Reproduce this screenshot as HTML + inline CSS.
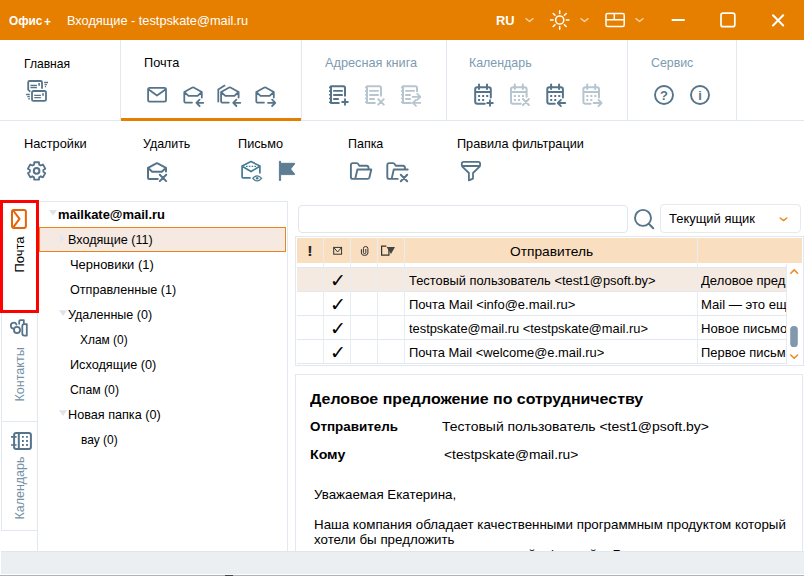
<!DOCTYPE html>
<html lang="ru"><head><meta charset="utf-8"><title>Офис+ Почта</title>
<style>
html,body{margin:0;padding:0}
body{width:804px;height:576px;overflow:hidden;background:#fff;position:relative;font-family:"Liberation Sans",sans-serif;font-size:13px;color:#000}
.a{position:absolute}
.t{position:absolute;white-space:pre;transform-origin:0 50%;display:block}
.ln{position:absolute;background:#e1e8ef}
svg{position:absolute;overflow:visible}
.ic{fill:none;stroke:#55748a;stroke-width:1.8;stroke-linecap:round;stroke-linejoin:round}
.dis .ic,.ic.dis{stroke:#b7c5cf}
</style></head>
<body>
<header class="a" style="left:0;top:0;width:804px;height:40px;background:#e67e00"><span class="t" style="font-size:13px;line-height:16px;color:#fff;font-weight:700;left:9.00px;top:12.50px;transform:scaleX(0.9096);">Офис</span><span class="t" style="font-size:12px;line-height:15px;color:#fff;font-weight:700;left:43.80px;top:14.74px;transform:scaleX(0.9978);">+</span><span class="t" style="font-size:13px;line-height:16px;color:#fff;left:67.30px;top:12.50px;transform:scaleX(0.9813);">Входящие - testpskate@mail.ru</span><span class="t" style="font-size:13px;line-height:16px;color:#fff;font-weight:700;left:495.50px;top:12.50px;transform:scaleX(0.9903);">RU</span></header><nav class="a" style="left:0;top:40px;width:804px;height:81px"><div class="ln" style="left:0;top:80px;width:804px;height:1px"></div><div class="ln" style="left:120px;top:0;width:1px;height:80px"></div><div class="ln" style="left:301px;top:0;width:1px;height:80px"></div><div class="ln" style="left:446px;top:0;width:1px;height:80px"></div><div class="ln" style="left:627px;top:0;width:1px;height:80px"></div><div class="ln" style="left:736px;top:0;width:1px;height:80px"></div><div class="a" style="left:121px;top:78px;width:180px;height:3px;background:#e67e00"></div></nav><span class="t" style="font-size:13px;line-height:16px;color:#000;left:23.60px;top:55.50px;transform:scaleX(0.9316);">Главная</span><span class="t" style="font-size:13px;line-height:16px;color:#000;left:143.50px;top:54.50px;transform:scaleX(0.9776);">Почта</span><span class="t" style="font-size:13px;line-height:16px;color:#7d9bb1;left:324.80px;top:54.50px;transform:scaleX(0.9788);">Адресная книга</span><span class="t" style="font-size:13px;line-height:16px;color:#7d9bb1;left:469.40px;top:54.50px;transform:scaleX(0.9539);">Календарь</span><span class="t" style="font-size:13px;line-height:16px;color:#7d9bb1;left:650.50px;top:54.50px;transform:scaleX(0.9499);">Сервис</span><span class="t" style="font-size:13px;line-height:16px;color:#000;left:23.60px;top:135.50px;transform:scaleX(0.9835);">Настройки</span><span class="t" style="font-size:13px;line-height:16px;color:#000;left:143.00px;top:135.50px;transform:scaleX(0.9528);">Удалить</span><span class="t" style="font-size:13px;line-height:16px;color:#000;left:237.80px;top:135.50px;transform:scaleX(0.9773);">Письмо</span><span class="t" style="font-size:13px;line-height:16px;color:#000;left:348.00px;top:135.50px;transform:scaleX(0.9585);">Папка</span><span class="t" style="font-size:13px;line-height:16px;color:#000;left:457.20px;top:135.50px;transform:scaleX(0.9747);">Правила фильтрации</span><aside class="a" style="left:0;top:200px;width:39px;height:351px"><div class="ln" style="left:1px;top:113px;width:1px;height:218px"></div><div class="ln" style="left:37px;top:113px;width:1px;height:238px"></div><div class="ln" style="left:1px;top:221px;width:37px;height:1px"></div><div class="ln" style="left:1px;top:330px;width:37px;height:1px"></div><div class="a" style="left:0;top:0;width:33px;height:107px;border:3px solid #fe0000"></div></aside><span class="t" style="font-size:13px;line-height:16px;color:#000;left:23.60px;top:259.80px;transform-origin:0 12.50px;transform:rotate(-90deg) scaleX(0.9997);">Почта</span><span class="t" style="font-size:13px;line-height:16px;color:#7590a5;left:23.80px;top:389.20px;transform-origin:0 12.50px;transform:rotate(-90deg) scaleX(0.9669);">Контакты</span><span class="t" style="font-size:13px;line-height:16px;color:#7590a5;left:23.80px;top:507.00px;transform-origin:0 12.50px;transform:rotate(-90deg) scaleX(0.9585);">Календарь</span><section class="a" style="left:39px;top:201px;width:248px;height:350px;border-top:1px solid #e1e8ef;border-right:1px solid #e1e8ef"></section><div class="a" style="left:39px;top:227px;width:245px;height:23px;border:1px solid #e8861a;background:#f5e9e1"></div><span class="t" style="font-size:13px;line-height:16px;color:#000;font-weight:700;left:58.40px;top:206.50px;transform:scaleX(0.9968);">mailkate@mail.ru</span><span class="t" style="font-size:13px;line-height:16px;color:#000;left:68.30px;top:231.50px;transform:scaleX(0.9690);">Входящие (11)</span><span class="t" style="font-size:13px;line-height:16px;color:#000;left:70.30px;top:256.50px;transform:scaleX(0.9946);">Черновики (1)</span><span class="t" style="font-size:13px;line-height:16px;color:#000;left:70.30px;top:281.50px;transform:scaleX(0.9706);">Отправленные (1)</span><span class="t" style="font-size:13px;line-height:16px;color:#000;left:68.30px;top:306.50px;transform:scaleX(0.9632);">Удаленные (0)</span><span class="t" style="font-size:13px;line-height:16px;color:#000;left:80.30px;top:331.50px;transform:scaleX(0.9184);">Хлам (0)</span><span class="t" style="font-size:13px;line-height:16px;color:#000;left:70.30px;top:356.50px;transform:scaleX(0.9755);">Исходящие (0)</span><span class="t" style="font-size:13px;line-height:16px;color:#000;left:70.30px;top:381.50px;transform:scaleX(0.9403);">Спам (0)</span><span class="t" style="font-size:13px;line-height:16px;color:#000;left:68.30px;top:406.50px;transform:scaleX(0.9729);">Новая папка (0)</span><span class="t" style="font-size:13px;line-height:16px;color:#000;left:80.80px;top:431.50px;transform:scaleX(0.9232);">вау (0)</span><div class="a" style="left:298px;top:205px;width:328px;height:26px;border:1px solid #dfe6ed;border-radius:4px"></div><div class="a" style="left:660px;top:204px;width:139px;height:27px;border:1px solid #e4eaf0;border-radius:4px"></div><span class="t" style="font-size:13px;line-height:16px;color:#000;left:669.00px;top:210.50px;transform:scaleX(0.9966);">Текущий ящик</span><div class="a" style="left:295px;top:236px;width:507px;height:128px;border:1px solid #e1e8ef"></div><div class="a" style="left:297px;top:238px;width:505px;height:25px;background:#f9dfbf"></div><div class="a" style="left:297px;top:268px;width:490px;height:24px;background:#f5eae2"></div><div class="ln" style="left:297px;top:267px;width:490px;height:1px"></div><div class="ln" style="left:297px;top:291px;width:490px;height:1px"></div><div class="ln" style="left:297px;top:315px;width:490px;height:1px"></div><div class="ln" style="left:297px;top:339px;width:490px;height:1px"></div><div class="ln" style="left:297px;top:363px;width:490px;height:1px"></div><div class="ln" style="left:323px;top:238px;width:1px;height:126px;background:#e6edf3"></div><div class="ln" style="left:350px;top:238px;width:1px;height:126px;background:#e6edf3"></div><div class="ln" style="left:377px;top:238px;width:1px;height:126px;background:#e6edf3"></div><div class="ln" style="left:404px;top:238px;width:1px;height:126px;background:#e6edf3"></div><div class="ln" style="left:697px;top:238px;width:1px;height:126px;background:#e6edf3"></div><div class="ln" style="left:786px;top:264px;width:1px;height:100px;background:#e4eaf0"></div><span class="t" style="font-size:13px;line-height:16px;color:#000;left:509.90px;top:243.50px;transform:scaleX(1.0559);">Отправитель</span><span class="t" style="font-size:14px;line-height:18px;color:#2b2b2b;font-weight:700;left:307.20px;top:242.15px;transform:scaleX(1.2500);">!</span><div class="a" style="left:698px;top:264px;width:88px;height:100px;overflow:hidden"><span class="t" style="font-size:13px;line-height:16px;color:#000;left:3.40px;top:8.50px;transform:scaleX(1.0023);">Деловое пред</span><span class="t" style="font-size:13px;line-height:16px;color:#000;left:3.40px;top:32.50px;transform:scaleX(1.0096);">Mail — это ещ</span><span class="t" style="font-size:13px;line-height:16px;color:#000;left:3.40px;top:56.50px;transform:scaleX(1.0119);">Новое письмо</span><span class="t" style="font-size:13px;line-height:16px;color:#000;left:3.40px;top:80.50px;transform:scaleX(0.9935);">Первое письм</span></div><div class="a" style="left:787px;top:263px;width:15px;height:102px;background:#fff"></div><span class="t" style="font-size:13px;line-height:16px;color:#000;left:408.70px;top:272.50px;transform:scaleX(0.9905);">Тестовый пользователь &lt;test1@psoft.by&gt;</span><span class="t" style="font-size:19px;line-height:24px;color:#000;left:329.90px;top:268.32px;transform:scaleX(1.0000);font-family:'DejaVu Sans',sans-serif;">✓</span><span class="t" style="font-size:13px;line-height:16px;color:#000;left:408.70px;top:296.50px;transform:scaleX(0.9996);">Почта Mail &lt;info@e.mail.ru&gt;</span><span class="t" style="font-size:19px;line-height:24px;color:#000;left:329.90px;top:292.32px;transform:scaleX(1.0000);font-family:'DejaVu Sans',sans-serif;">✓</span><span class="t" style="font-size:13px;line-height:16px;color:#000;left:408.70px;top:320.50px;transform:scaleX(0.9883);">testpskate@mail.ru &lt;testpskate@mail.ru&gt;</span><span class="t" style="font-size:19px;line-height:24px;color:#000;left:329.90px;top:316.32px;transform:scaleX(1.0000);font-family:'DejaVu Sans',sans-serif;">✓</span><span class="t" style="font-size:13px;line-height:16px;color:#000;left:408.70px;top:344.50px;transform:scaleX(0.9929);">Почта Mail &lt;welcome@e.mail.ru&gt;</span><span class="t" style="font-size:19px;line-height:24px;color:#000;left:329.90px;top:340.32px;transform:scaleX(1.0000);font-family:'DejaVu Sans',sans-serif;">✓</span><article class="a" style="left:295px;top:374px;width:506px;height:177px;border:1px solid #e1e8ef;border-bottom:0"></article><span class="t" style="font-size:15.5px;line-height:19px;color:#000;font-weight:700;left:309.80px;top:389.13px;transform:scaleX(1.0279);">Деловое предложение по сотрудничеству</span><span class="t" style="font-size:13px;line-height:16px;color:#000;font-weight:700;left:310.40px;top:418.50px;transform:scaleX(1.0311);">Отправитель</span><span class="t" style="font-size:13px;line-height:16px;color:#000;left:442.00px;top:418.50px;transform:scaleX(1.0728);">Тестовый пользователь &lt;test1@psoft.by&gt;</span><span class="t" style="font-size:13px;line-height:16px;color:#000;font-weight:700;left:310.40px;top:446.50px;transform:scaleX(1.0898);">Кому</span><span class="t" style="font-size:13px;line-height:16px;color:#000;left:443.70px;top:446.50px;transform:scaleX(1.0604);">&lt;testpskate@mail.ru&gt;</span><span class="t" style="font-size:13.333px;line-height:17px;color:#000;left:314.00px;top:486.28px;transform:scaleX(1.0000);">Уважаемая Екатерина,</span><span class="t" style="font-size:13.333px;line-height:17px;color:#000;left:314.00px;top:516.28px;transform:scaleX(1.0000);">Наша компания обладает качественными программным продуктом который</span><span class="t" style="font-size:13.333px;line-height:17px;color:#000;left:314.00px;top:531.28px;transform:scaleX(1.0000);">хотели бы предложить</span><span class="t" style="font-size:13.333px;line-height:17px;color:#000;left:314.00px;top:546.28px;transform:scaleX(1.0000);">вам на взаимовыгодных</span><span class="t" style="font-size:13.333px;line-height:17px;color:#000;left:495.40px;top:546.28px;transform:scaleX(1.0000);">нашей</span><span class="t" style="font-size:13.333px;line-height:17px;color:#000;left:547.10px;top:546.28px;transform:scaleX(1.0000);">фирмой</span><span class="t" style="font-size:13.333px;line-height:17px;color:#000;left:612.50px;top:546.28px;transform:scaleX(1.0000);">Бизнес</span><footer class="a" style="left:1px;top:551px;width:803px;height:22px;background:#ebeff2;border-top:1px solid #dfe6ec"></footer><div class="a" style="left:0;top:574px;width:804px;height:1px;background:#fff"></div><div class="a" style="left:0;top:575px;width:804px;height:1px;background:#b2b2b2"></div><div class="a" style="left:225px;top:575px;width:8px;height:1px;background:#444"></div><svg class="a" style="left:0;top:0" width="804" height="576" viewBox="0 0 804 576"><path class="ic" d="M526 18.7 L529.5 21.5 L533 18.7" style="stroke:#f6cf9e;stroke-width:1.5"/><path class="ic" d="M581 18.7 L584.5 21.5 L588 18.7" style="stroke:#f6cf9e;stroke-width:1.5"/><path class="ic" d="M636 18.7 L639.5 21.5 L643 18.7" style="stroke:#f6cf9e;stroke-width:1.5"/><circle cx="559.7" cy="20" r="4.1" fill="none" stroke="#fff" stroke-width="1.5"/><path class="ic" d="M566.30 20.00 L568.90 20.00 M564.37 24.67 L566.21 26.51 M559.70 26.60 L559.70 29.20 M555.03 24.67 L553.19 26.51 M553.10 20.00 L550.50 20.00 M555.03 15.33 L553.19 13.49 M559.70 13.40 L559.70 10.80 M564.37 15.33 L566.21 13.49 " style="stroke:#fff;stroke-width:1.5"/><rect x="606" y="13.4" width="18.2" height="13" rx="1.5" fill="none" stroke="#fff" stroke-width="1.5"/><path class="ic" d="M606 19.7 H624.2 M614.3 13.4 V19.7" style="stroke:#fff;stroke-width:1.5"/><path class="ic" d="M672.5 20 H684" style="stroke:#fff;stroke-width:2"/><rect x="721" y="13.1" width="13.8" height="13.6" rx="2" fill="none" stroke="#fff" stroke-width="1.7"/><path class="ic" d="M773 15.3 L783.2 25.5 M783.2 15.3 L773 25.5" style="stroke:#fff;stroke-width:2"/><path class="ic" d="M29.7 91.2 L28.2 89.7 V82.4 Q28.2 81 29.6 81 H40.6 Q42 81 42 82.4 V88" /><path class="ic" d="M30.4 85.4 H36.9 M30.4 87.5 H36.9" style="stroke-width:1.3;stroke-linecap:butt"/><path class="ic" d="M39.1 83.1 V85.7" style="stroke-width:1.6;stroke-linecap:butt"/><rect class="ic" x="32" y="91" width="14" height="9.9" rx="1.6"/><path class="ic" d="M34.2 95.4 H40.9 M34.2 97.6 H40.9" style="stroke-width:1.3;stroke-linecap:butt"/><path class="ic" d="M43 93.2 V95.7" style="stroke-width:1.6;stroke-linecap:butt"/><path class="ic" d="M44.2 82.5 H48 M44.6 84.6 H46.9 M44.9 86.6 H46 M26.1 94.5 H29.8 M27.3 96.6 H29.8 M28.3 98.7 H29.8" style="stroke-width:1.4;stroke-linecap:butt"/><rect class="ic" x="148.1" y="87.9" width="17.9" height="13.8" rx="1.6"/><path class="ic" d="M148.6 89.6 L157 95.6 L165.5 89.6" /><path class="ic" d="M184.3 101.6 V92 L192.45000000000002 87.5 Q193.05 87.2 193.65 87.5 L201.8 92 V97.5 M184.3 101.6 Q184.3 102.6 185.3 102.6 H192.0 M184.8 92.5 L188.5 95.9 H197.60000000000002 L201.3 92.5" /><path class="ic" d="M203.3 102.8 H196.4 M199.6 99.6 L196.4 102.8 L199.6 106.0" /><path class="ic" d="M221.1 101.6 V92 L229.25 87.5 Q229.85 87.2 230.45 87.5 L238.6 92 V97.5 M221.1 101.6 Q221.1 102.6 222.1 102.6 H228.79999999999998 M221.6 92.5 L225.29999999999998 95.9 H234.4 L238.1 92.5" /><path class="ic" d="M240.3 102.8 H233.2 M236.39999999999998 99.6 L233.2 102.8 L236.39999999999998 106.0" /><path class="ic" d="M224.6 85.6 L218.3 89.4 V101.6" /><path class="ic" d="M256.3 101.6 V92 L264.45 87.5 Q265.05 87.2 265.65000000000003 87.5 L273.8 92 V97.5 M256.3 101.6 Q256.3 102.6 257.3 102.6 H264.0 M256.8 92.5 L260.5 95.9 H269.6 L273.3 92.5" /><path class="ic" d="M268 102.8 H275.3 M272.1 99.6 L275.3 102.8 L272.1 106.0" /><path class="ic" d="M338.8 103.1 H331 V86.3 H343.4 Q345 86.3 345 87.9 V95.8" style="stroke-width:2"/><path class="ic" d="M333.2 90.9 H342.8 M333.2 94.95 H342.8 M333.2 99 H338.8" style="stroke-width:1.9;stroke-linecap:butt"/><path class="ic" d="M329 87.4 H331 M329 91.1 H331 M329 94.8 H331 M329 98.5 H331 M329 102.2 H331" style="stroke-width:1.6;stroke-linecap:butt"/><path class="ic" d="M342.2 102 H347.8 M345 99.2 V104.8" style="stroke-width:1.9"/><path class="ic dis" d="M374.8 103.1 H367 V86.3 H379.4 Q381 86.3 381 87.9 V95.8" style="stroke-width:2"/><path class="ic dis" d="M369.2 90.9 H378.8 M369.2 94.95 H378.8 M369.2 99 H374.8" style="stroke-width:1.9;stroke-linecap:butt"/><path class="ic dis" d="M365 87.4 H367 M365 91.1 H367 M365 94.8 H367 M365 98.5 H367 M365 102.2 H367" style="stroke-width:1.6;stroke-linecap:butt"/><path class="ic dis" d="M378.2 99.1 L383.8 104.7 M383.8 99.1 L378.2 104.7" style="stroke-width:1.9"/><path class="ic dis" d="M410.8 103.1 H403 V86.3 H415.4 Q417 86.3 417 87.9 V91.3" style="stroke-width:2"/><path class="ic dis" d="M405.2 90.9 H414.8 M405.2 94.95 H410.8 M405.2 99 H410.8" style="stroke-width:1.9;stroke-linecap:butt"/><path class="ic dis" d="M401 87.4 H403 M401 91.1 H403 M401 94.8 H403 M401 98.5 H403 M401 102.2 H403" style="stroke-width:1.6;stroke-linecap:butt"/><path class="ic dis" d="M412.6 96.9 H420.3 M417.2 93.9 L420.4 96.9 L417.2 99.9 M420.3 102.9 H412.9 M416 99.9 L412.8 102.9 L416 105.9" style="stroke-width:1.8"/><path class="ic" d="M484.8 103.7 H477.2 Q475.2 103.7 475.2 101.7 V89.2 Q475.2 87.2 477.2 87.2 H488.8 Q490.8 87.2 490.8 89.2 V97.5 M475.2 92 H490.8 M479.0 84.6 V89 M487.0 84.6 V89" style="stroke-width:2"/><path class="ic" d="M478.09999999999997 95.95 h2 M482.15 95.95 h2 M486.2 95.95 h2 M478.09999999999997 99.95 h2 M482.15 99.95 h2 " style="stroke-width:2;stroke-linecap:butt"/><path class="ic" d="M487.2 103 H492.8 M490 100.2 V105.8" style="stroke-width:1.9"/><path class="ic dis" d="M520.8 103.7 H513 Q511 103.7 511 101.7 V89.2 Q511 87.2 513 87.2 H524.6 Q526.6 87.2 526.6 89.2 V96.8 M511 92 H526.6 M514.8 84.6 V89 M522.8 84.6 V89" style="stroke-width:2"/><path class="ic dis" d="M513.9 95.95 h2 M517.95 95.95 h2 M522 95.95 h2 M513.9 99.95 h2 M517.95 99.95 h2 " style="stroke-width:2;stroke-linecap:butt"/><path class="ic dis" d="M522.9 99 L528.9 105 M528.9 99 L522.9 105" style="stroke-width:1.9"/><path class="ic" d="M554.6999999999999 103.7 H549.3 Q547.3 103.7 547.3 101.7 V89.2 Q547.3 87.2 549.3 87.2 H560.9 Q562.9 87.2 562.9 89.2 V97.5 M547.3 92 H562.9 M551.0999999999999 84.6 V89 M559.0999999999999 84.6 V89" style="stroke-width:2"/><path class="ic" d="M550.1999999999999 95.95 h2 M554.25 95.95 h2 M558.3 95.95 h2 M550.1999999999999 99.95 h2 M554.25 99.95 h2 " style="stroke-width:2;stroke-linecap:butt"/><path class="ic" d="M565.2 103 H557.9 M560.9 99.9 L557.8 103 L560.9 106.1" style="stroke-width:1.9"/><path class="ic dis" d="M590.6 103.7 H585.4 Q583.4 103.7 583.4 101.7 V89.2 Q583.4 87.2 585.4 87.2 H597.0 Q599.0 87.2 599.0 89.2 V97.5 M583.4 92 H599.0 M587.1999999999999 84.6 V89 M595.1999999999999 84.6 V89" style="stroke-width:2"/><path class="ic dis" d="M586.3 95.95 h2 M590.35 95.95 h2 M594.4 95.95 h2 M586.3 99.95 h2 M590.35 99.95 h2 " style="stroke-width:2;stroke-linecap:butt"/><path class="ic dis" d="M593.6 103 H601.5 M598.5 99.9 L601.6 103 L598.5 106.1" style="stroke-width:1.9"/><circle class="ic" cx="664" cy="95" r="9" style="stroke-width:1.9"/><circle class="ic" cx="700" cy="95" r="9" style="stroke-width:1.9"/><text opacity="0.99" x="664" y="99.8" text-anchor="middle" font-family="Liberation Sans, sans-serif" font-size="13" font-weight="700" fill="#55748a">?</text><text opacity="0.99" x="700" y="99.8" text-anchor="middle" font-family="Liberation Sans, sans-serif" font-size="13" font-weight="700" fill="#55748a">i</text><path class="ic" d="M34.05 164.60 L34.20 162.23 L39.00 162.23 L39.15 164.60 L40.78 165.54 L42.91 164.48 L45.31 168.64 L43.33 169.96 L43.33 171.84 L45.31 173.16 L42.91 177.32 L40.78 176.26 L39.15 177.20 L39.00 179.57 L34.20 179.57 L34.05 177.20 L32.42 176.26 L30.29 177.32 L27.89 173.16 L29.87 171.84 L29.87 169.96 L27.89 168.64 L30.29 164.48 L32.42 165.54 Z" style="stroke-width:1.8"/><circle class="ic" cx="36.6" cy="170.9" r="2.8" style="stroke-width:2"/><path class="ic" d="M148 178.0 V167.8 L156.4 163.3 Q157.0 163.0 157.6 163.3 L166 167.8 V171.4 M148 178.0 Q148 179.0 149 179.0 H157.8 M148.5 168.3 L152.2 171.70000000000002 H161.8 L165.5 168.3" style="stroke-width:2"/><path class="ic" d="M159.8 174.7 L166.2 181.1 M166.2 174.7 L159.8 181.1" style="stroke-width:2"/><path class="ic" d="M242.1 177 V166 L251 161.6 L259.9 166 V172.8 M242.1 177 Q242.1 177.9 243 177.9 H250 M242.6 166.6 L251 171.6 L259.4 166.6" style="stroke:#447c93;stroke-width:1.7"/><path class="ic" d="M246 166.4 H256" style="stroke:#447c93;stroke-width:1.4;stroke-dasharray:1.6 1.2;stroke-linecap:butt"/><path class="ic" d="M252.8 178.4 Q257.2 173.4 261.6 178.4 Q257.2 183.4 252.8 178.4 Z" style="stroke:#447c93;stroke-width:1.4"/><circle cx="257.2" cy="178.3" r="1.3" fill="#447c93"/><path d="M279.4 161.3 H280.6 V163.3 H294.6 V164 L290.6 169 L294.6 174 V174.6 H280.6 V180.5 H279.4 Z" fill="#5c7d94" stroke="#4f7088" stroke-width="0.8" stroke-linejoin="round"/><path class="ic" d="M371.29999999999995 169.5 H357.4 L355.2 178.9 M371.29999999999995 169.5 L369.4 177.5 Q369.0 178.9 367.5 178.9 H352.9 Q350.9 178.9 350.9 176.9 V165.1 Q350.9 163.1 352.9 163.1 H356.5 Q357.9 163.1 358.5 164.4 L359.29999999999995 165.8 H366.5 Q368.5 165.8 368.5 167.8 V169.5" style="stroke-width:1.9"/><path class="ic" d="M407.7 169.5 H393.8 L391.6 178.9 M397.7 178.9 H389.3 Q387.3 178.9 387.3 176.9 V165.1 Q387.3 163.1 389.3 163.1 H392.90000000000003 Q394.3 163.1 394.90000000000003 164.4 L395.7 165.8 H402.90000000000003 Q404.90000000000003 165.8 404.90000000000003 167.8 V169.5" style="stroke-width:1.9"/><path class="ic" d="M400.8 174.8 L407.2 181.2 M407.2 174.8 L400.8 181.2" style="stroke-width:2"/><path class="ic" d="M463.8 161.8 H478.2 Q480.1 161.8 480.1 163.7 V165.3 Q480.1 166 479.6 166.6 L473 173 V178.6 L468.9 180.4 V173 L462.3 166.6 Q461.8 166 461.8 165.3 V163.7 Q461.8 161.8 463.8 161.8 Z M462.3 166 H479.6" style="stroke-width:1.8"/><rect x="12" y="210" width="13.9" height="17.9" rx="1.8" fill="none" stroke="#e5660a" stroke-width="2"/><path class="ic" d="M13.6 211 L19.5 218.9 L13.6 226.9" style="stroke:#e5660a;stroke-width:2"/><path class="ic" d="M16.5 324.6 A2.95 2.95 0 1 0 13.9 328.65" style="stroke-width:1.8"/><circle class="ic" cx="17" cy="330" r="3.05" style="stroke-width:1.8"/><path class="ic" d="M19.2 323.8 V321.4 Q19.2 320.2 20.4 320.2 H23.8 V323.4" style="stroke-width:1.8"/><path class="ic" d="M26.8 324.1 H24.3 Q22.3 324.1 22.3 326.1 V333.6 Q22.3 335.6 24.3 335.6 H26.8 Z" style="stroke-width:1.8"/><rect class="ic" x="14.1" y="433" width="16.8" height="16" rx="2" style="stroke-width:2"/><path class="ic" d="M18.8 433 V449" style="stroke-width:2"/><path class="ic" d="M11 436.9 H16.6 M11 445 H16.6" style="stroke-width:1.7;stroke-linecap:butt"/><path class="ic" d="M22.0 436.9 h1.8 M22.0 441 h1.8 M22.0 445 h1.8 M26.1 436.9 h1.8 M26.1 441 h1.8 M26.1 445 h1.8 " style="stroke-width:1.8;stroke-linecap:butt"/><path d="M49 210 H57 L53 215.8 Z" fill="#dde3ea"/><path d="M59.8 234 L65 238.4 L59.8 242.8 Z" fill="#dfe8f2"/><path d="M59 310.2 H67 L63 316 Z" fill="#dde3ea"/><path d="M59 410.2 H67 L63 416 Z" fill="#dde3ea"/><circle class="ic" cx="643" cy="217.9" r="8" style="stroke-width:1.9"/><path class="ic" d="M648.8 223.8 L653.2 228.2" style="stroke-width:2"/><path class="ic" d="M780.2 218 L783.5 220.6 L786.8 218" style="stroke:#ea8a1e;stroke-width:1.5"/><rect x="333.7" y="247.4" width="7.9" height="6.8" fill="none" stroke="#333" stroke-width="1"/><path class="ic" d="M334 247.8 L337.65 252 L341.3 247.8" style="stroke:#333;stroke-width:1;stroke-linecap:butt"/><path class="ic" d="M361.4 249.6 V253 Q361.4 255.4 364.6 255.4 Q367.9 255.4 367.9 253 V248.6 Q367.9 246.5 365.6 246.5 Q363.4 246.5 363.4 248.6 V252.6 Q363.4 253.6 364.6 253.6 Q365.8 253.6 365.8 252.6 V249.4" style="stroke:#333;stroke-width:1"/><path class="ic" d="M386.4 246.1 H381.6 V255.1 H388.9 V249" style="stroke:#333;stroke-width:1.2;stroke-linejoin:miter;stroke-linecap:butt"/><path d="M386.6 247 H395 L391 254 Z" fill="#444"/><path class="ic" d="M790.8 273.2 L794.2 269.9 L797.6 273.2" style="stroke:#ea8a1e;stroke-width:1.5"/><path class="ic" d="M790.8 355 L794.2 358.3 L797.6 355" style="stroke:#ea8a1e;stroke-width:1.5"/><rect x="790.2" y="326" width="7.6" height="21" rx="3.6" fill="#8198ad"/></svg>
</body></html>
